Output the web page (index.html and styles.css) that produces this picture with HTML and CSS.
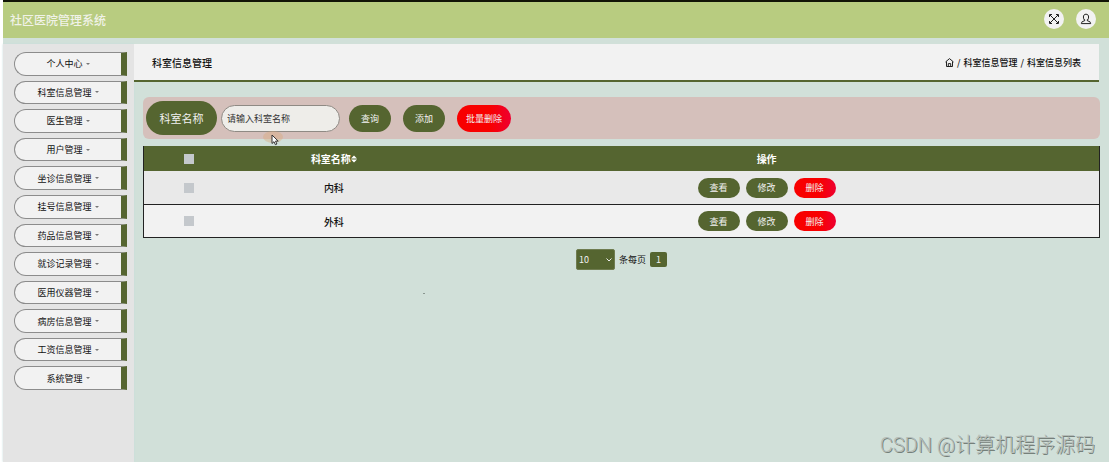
FILE: index.html
```html
<!DOCTYPE html>
<html lang="zh-CN">
  <head>
    <meta charset="UTF-8">
    <meta name="viewport" content="width=device-width, initial-scale=1.0">
    <title>社区医院管理系统</title>
    <link rel="stylesheet" href="styles.css">
  </head>
  <body>
    <header class="navbar">
      <h1 class="brand">社区医院管理系统</h1>
      <div class="nav-tools">
        <button type="button" class="nav-btn" aria-label="全屏">
          <svg width="12" height="12" viewBox="0 0 12 12"><path d="M2 2l8 8M10 2l-8 8M1.500 4V1.500H4M8 1.500h2.500V4M10.500 8v2.500H8M4 10.500H1.500V8"/></svg>
        </button>
        <button type="button" class="nav-btn" aria-label="用户">
          <svg width="12" height="12" viewBox="0 0 12 12"><path d="M4.600 7.200C3.800 6.500 3.400 5.300 3.400 4c0-1.700.9-2.800 2.600-2.800S8.600 2.300 8.600 4c0 1.300-.4 2.500-1.200 3.200M4.600 6.500v1.300L2.200 8.600 1.300 10.600h9.400l-.9-2-2.400-.8V6.500"/></svg>
        </button>
      </div>
    </header>

    <div class="layout">
      <nav class="sidebar">
        <ul class="menu">
          <li><a href="#">个人中心</a></li>
          <li><a href="#">科室信息管理</a></li>
          <li><a href="#">医生管理</a></li>
          <li><a href="#">用户管理</a></li>
          <li><a href="#">坐诊信息管理</a></li>
          <li><a href="#">挂号信息管理</a></li>
          <li><a href="#">药品信息管理</a></li>
          <li><a href="#">就诊记录管理</a></li>
          <li><a href="#">医用仪器管理</a></li>
          <li><a href="#">病房信息管理</a></li>
          <li><a href="#">工资信息管理</a></li>
          <li><a href="#">系统管理</a></li>
        </ul>
      </nav>

      <main class="content">
        <div class="page-head">
          <h2>科室信息管理</h2>
          <div class="breadcrumb">
            <a href="#" aria-label="首页"><svg width="9" height="9" viewBox="0 0 9 9"><path d="M.5 4L4.500.6 8.500 4M1.500 3.500v5h6v-5M3.300 8.500V5.600h2.400v2.900"/></svg></a>
            <span>/</span>
            <a href="#">科室信息管理</a>
            <span>/</span>
            <span>科室信息列表</span>
          </div>
        </div>

        <div class="panel">
          <form class="search">
            <label for="name">科室名称</label>
            <input type="text" id="name" placeholder="请输入科室名称">
            <div class="search-actions">
              <button type="button" class="btn">查询</button>
              <button type="button" class="btn">添加</button>
              <button type="button" class="btn btn-danger">批量删除</button>
            </div>
          </form>

          <table class="list">
            <thead>
              <tr>
                <th class="col-check"><input type="checkbox" aria-label="全选"></th>
                <th class="col-name"><span class="sort">科室名称<svg width="6" height="8" viewBox="0 0 6 8"><path d="M0 3.400L3 .4l3 3zM0 4.600h6l-3 3z"/></svg></span></th>
                <th>操作</th>
              </tr>
            </thead>
            <tbody>
              <tr>
                <td><input type="checkbox" aria-label="选择内科"></td>
                <td>内科</td>
                <td>
                  <div class="row-actions">
                    <button type="button" class="btn">查看</button>
                    <button type="button" class="btn">修改</button>
                    <button type="button" class="btn btn-danger">删除</button>
                  </div>
                </td>
              </tr>
              <tr>
                <td><input type="checkbox" aria-label="选择外科"></td>
                <td>外科</td>
                <td>
                  <div class="row-actions">
                    <button type="button" class="btn">查看</button>
                    <button type="button" class="btn">修改</button>
                    <button type="button" class="btn btn-danger">删除</button>
                  </div>
                </td>
              </tr>
            </tbody>
          </table>

          <div class="pager">
            <span class="select-wrap">
              <select id="size">
                <option>10</option>
                <option>20</option>
                <option>50</option>
              </select>
              <svg width="6" height="4" viewBox="0 0 6 4"><path d="M.5.5L3 3 5.500.5"/></svg>
            </span>
            <label for="size">条每页</label>
            <button type="button" class="page">1</button>
          </div>
        </div>
      </main>
    </div>

    <svg class="cursor" width="24" height="20" viewBox="0 0 24 20">
      <ellipse cx="11" cy="7" rx="10" ry="6"/>
      <path d="M10 5v8.500l2-1.800 1.400 3 1.500-.7-1.400-2.900h2.700z"/>
    </svg>
    <span class="speck"></span>
    <div class="watermark">CSDN @计算机程序源码</div>
  </body>
</html>
```
FILE: styles.css
```css
* {
  box-sizing: border-box;
}

body {
  margin: 0;
  padding-left: 3px;
  min-height: 100vh;
  display: flex;
  flex-direction: column;
  position: relative;
  background: #fff;
  color: #111;
  font-family: "Noto Sans CJK SC", sans-serif;
  font-size: 9px;
}

a {
  color: inherit;
  text-decoration: none;
}

button,
input,
select {
  font-family: inherit;
  font-size: 9px;
}

/* top bar */
.navbar {
  display: flex;
  justify-content: space-between;
  align-items: center;
  height: 38px;
  padding: 0 13px 2px 7px;
  border-top: 2px solid #111406;
  background: #b8cc80;
}

.brand {
  margin: 0;
  color: #f0f2e8;
  font-size: 12px;
  font-weight: 500;
}

.nav-tools {
  display: flex;
  gap: 12px;
}

.nav-btn {
  display: flex;
  justify-content: center;
  align-items: center;
  width: 20px;
  height: 20px;
  padding: 0;
  border: none;
  border-radius: 50%;
  background: #f2f2f2;
}

.nav-btn svg,
.breadcrumb svg {
  fill: none;
  stroke: #222;
}

.layout {
  flex: 1;
  display: flex;
  padding-top: 6px;
  background: #d1e0d9;
}

/* side menu */
.sidebar {
  width: 131px;
  padding: 8px 7px 8px 11px;
  background: #e4e4e4;
  box-shadow: 0 0 2px #c4dedb;
}

.menu {
  display: grid;
  grid-auto-rows: 1fr;
  gap: 5px;
  min-height: 338px;
  margin: 0;
  padding: 0;
  list-style: none;
}

.menu a {
  display: flex;
  justify-content: center;
  align-items: center;
  gap: 3px;
  height: 100%;
  border: 1px solid #8c8c8c;
  border-right: 6px solid #556530;
  border-radius: 12px 0 0 12px;
  background: #f2f2f2;
}

.menu a::after {
  content: "";
  border: 2px solid transparent;
  border-top-color: #777;
  border-bottom: none;
}

.content {
  flex: 1;
}

.page-head {
  display: flex;
  justify-content: space-between;
  align-items: center;
  height: 38px;
  margin-right: 10px;
  padding: 0 18px;
  border-bottom: 2px solid #556530;
  background: #f2f2f2;
}

.page-head h2 {
  margin: 0;
  font-size: 10px;
  font-weight: 500;
}

.breadcrumb {
  display: flex;
  align-items: center;
  gap: 3px;
  font-weight: 500;
}

.breadcrumb svg {
  display: block;
}

.panel {
  padding: 15px 9px;
}

/* search */
.search {
  display: flex;
  align-items: center;
  gap: 4px;
  height: 42px;
  margin-bottom: 7px;
  padding: 0 3px;
  border-radius: 6px;
  background: #d5c0bb;
}

.search label {
  width: 71px;
  border-radius: 17px;
  background: #556530;
  color: #f2f2f2;
  font-size: 11px;
  line-height: 34px;
  text-align: center;
}

.search input {
  width: 119px;
  height: 27px;
  padding: 0 5px;
  border: 1px solid #8f8a84;
  border-radius: 14px;
  outline: none;
  background: #eeede9;
}

.search input::placeholder {
  color: #333;
}

.search-actions {
  display: flex;
  gap: 12px;
  margin-left: 5px;
}

.btn {
  min-width: 42px;
  height: 20px;
  padding: 0 9px;
  border: none;
  border-radius: 14px;
  background: #556530;
  color: #f2f2f2;
  cursor: pointer;
}

.search .btn {
  height: 27px;
}

.btn-danger {
  background: linear-gradient(to right, #f80000 60%, #ee0030);
}

/* table */
.list {
  width: 100%;
  border: 1px solid #222;
  border-top: none;
  border-collapse: collapse;
  table-layout: fixed;
  font-size: 10px;
  text-align: center;
}

.list th,
.list td {
  height: 33px;
  padding: 0;
  font-weight: 500;
}

.list th {
  height: 25px;
  background: #556530;
  color: #fff;
  font-weight: 700;
}

.list td {
  padding-top: 1px;
  border-bottom: 1px solid #222;
  background: #f2f2f2;
}

.list tbody tr:first-child td {
  background: #e9e9e9;
}

.col-check {
  width: 90px;
}

.col-name {
  width: 21%;
}

.list input {
  appearance: none;
  display: block;
  width: 10px;
  height: 10px;
  margin: 0 auto;
  background: #c4c8cc;
}

.sort {
  display: inline-flex;
  align-items: center;
}

.sort svg {
  fill: #fff;
}

.row-actions {
  display: flex;
  justify-content: center;
  gap: 6px;
}

/* pagination */
.pager {
  display: flex;
  justify-content: center;
  align-items: center;
  gap: 4px;
  margin-top: 11px;
}

.select-wrap {
  position: relative;
}

.select-wrap svg {
  position: absolute;
  right: 3px;
  top: 9px;
  fill: none;
  stroke: #eee;
  pointer-events: none;
}

.pager select {
  appearance: none;
  display: block;
  width: 39px;
  height: 21px;
  padding: 0 2px;
  border: 1px solid #6f7c50;
  border-radius: 2px;
  background: #556530;
  color: #f2f2f2;
}

.page {
  width: 17px;
  height: 15px;
  padding: 0;
  border: none;
  border-radius: 2px;
  background: #556530;
  color: #f2f2f2;
  line-height: 15px;
}

/* things lying over the page */
.cursor {
  position: absolute;
  left: 262px;
  top: 130px;
  pointer-events: none;
}

.cursor ellipse {
  fill: #d9a878;
  opacity: 0.4;
}

.cursor path {
  fill: #fff;
  stroke: #333;
}

.speck {
  position: absolute;
  left: 423px;
  top: 293px;
  width: 2px;
  height: 1px;
  background: #8a9690;
}

.watermark {
  position: absolute;
  right: 14px;
  bottom: 4px;
  color: #b4bcb8;
  font-family: Roboto, "Noto Sans CJK SC", sans-serif;
  font-size: 20px;
  font-weight: 300;
  text-shadow: 1px 1px 0 #75807a;
}
```
